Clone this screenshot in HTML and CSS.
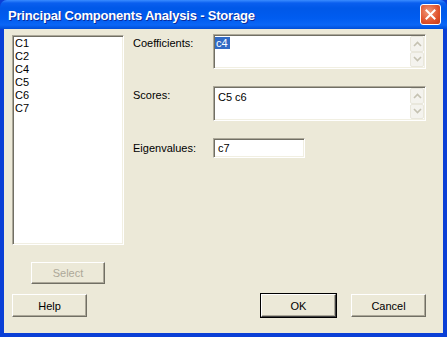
FILE: index.html
```html
<!DOCTYPE html>
<html lang="en">
<head>
  <meta charset="UTF-8">
  <title>Principal Components Analysis - Storage</title>
  <link rel="stylesheet" href="styles.css">
</head>
<body>

  <div class="window">
    <!-- Title bar -->
    <div class="titlebar">
      <span class="title">Principal Components Analysis - Storage</span>
      <span class="close">
        <svg width="11" height="11" viewBox="0 0 11 11">
          <path d="M1.5 1.5 L9.5 9.5 M9.5 1.5 L1.5 9.5" stroke="#fff" stroke-width="2" stroke-linecap="square" fill="none"/>
        </svg>
      </span>
    </div>

    <div class="client">
      <div class="main">
        <div class="varcol">
          <ul class="varlist">
            <li>C1</li>
            <li>C2</li>
            <li>C4</li>
            <li>C5</li>
            <li>C6</li>
            <li>C7</li>
          </ul>
          <button class="btn btn-select" disabled>Select</button>
        </div>

        <div class="form">
          <label class="lbl">Coefficients:</label>
          <div class="field multi">
            <div class="text"><span class="sel">c4</span></div>
            <div class="spin">
              <span class="arrow"><svg width="9" height="6" viewBox="0 0 9 6"><polyline points="1,5 4.5,1.5 8,5" stroke="#c5c2b2" stroke-width="1.6" fill="none"/></svg></span>
              <span class="arrow"><svg width="9" height="6" viewBox="0 0 9 6"><polyline points="1,1 4.5,4.5 8,1" stroke="#c5c2b2" stroke-width="1.6" fill="none"/></svg></span>
            </div>
          </div>

          <label class="lbl">Scores:</label>
          <div class="field multi scores">
            <div class="text">C5 c6</div>
            <div class="spin">
              <span class="arrow"><svg width="9" height="6" viewBox="0 0 9 6"><polyline points="1,5 4.5,1.5 8,5" stroke="#c5c2b2" stroke-width="1.6" fill="none"/></svg></span>
              <span class="arrow"><svg width="9" height="6" viewBox="0 0 9 6"><polyline points="1,1 4.5,4.5 8,1" stroke="#c5c2b2" stroke-width="1.6" fill="none"/></svg></span>
            </div>
          </div>

          <label class="lbl lbl-mid">Eigenvalues:</label>
          <div class="field single">
            <div class="text">c7</div>
          </div>
        </div>
      </div>

      <div class="actions">
        <button class="btn">Help</button>
        <span class="spacer"></span>
        <button class="btn btn-default">OK</button>
        <button class="btn">Cancel</button>
      </div>
    </div>
  </div>

</body>
</html>
```

FILE: styles.css
```css
body {
  margin: 0;
  background: #ece9d8;
  font-family: "Liberation Sans", Arial, sans-serif;
  font-size: 11px;
  color: #000;
}

.window {
  width: 447px;
  height: 337px;
  display: flex;
  flex-direction: column;
  background: #0a3fd6;
}

/* Title bar */
.titlebar {
  height: 29px;
  flex: none;
  display: flex;
  align-items: center;
  padding: 0 6px 0 8px;
  border-radius: 7px 7px 0 0;
  background: linear-gradient(#3a8cff 0px, #0a5fef 3px, #0058e8 8px, #005cf0 18px, #0a66f6 25px, #004ed8 29px);
}

.title {
  flex: 1;
  color: #fff;
  font-weight: bold;
  font-size: 13px;
  letter-spacing: -0.2px;
  text-shadow: 1px 1px 0 #0b2c9c;
  padding-top: 1px;
}

.close {
  width: 19px;
  height: 19px;
  border: 1px solid #fff;
  border-radius: 3px;
  background: radial-gradient(circle at 40% 35%, #f09a7c, #e0522c 60%, #c63a16);
  display: flex;
  align-items: center;
  justify-content: center;
}

/* Client area */
.client {
  flex: 1;
  background: #ece9d8;
  margin: 0 4px 4px 4px;
  padding: 5px 17px 0 8px;
  display: flex;
  flex-direction: column;
}

.main {
  display: flex;
  gap: 9px;
}

.varcol {
  width: 112px;
  display: flex;
  flex-direction: column;
  align-items: center;
}

.varlist {
  list-style: none;
  margin: 1px 0 0 0;
  width: 112px;
  height: 210px;
  box-sizing: border-box;
  background: #fff;
  border: 1px solid;
  border-color: #aca899 #fff #fff #aca899;
  box-shadow: inset 1px 1px 0 #716f64, inset -1px -1px 0 #f1efe2;
  padding: 1px 0 0 2px;
}

.varlist li {
  line-height: 13px;
}

.form {
  display: grid;
  grid-template-columns: 80px 213px;
  grid-template-rows: 35px 35px 20px;
  row-gap: 17px;
}

.lbl {
  padding-top: 3px;
  line-height: 13px;
}

.lbl-mid {
  padding-top: 0;
  align-self: center;
}

.field {
  box-sizing: border-box;
  background: #fff;
  border: 1px solid;
  border-color: #aca899 #fff #fff #aca899;
  box-shadow: inset 1px 1px 0 #716f64, inset -1px -1px 0 #f1efe2;
  display: flex;
}

.field .text {
  flex: 1;
  padding: 2px 0 0 1px;
  line-height: 13px;
}

.single {
  width: 92px;
  justify-self: start;
}

.single .text {
  padding-top: 3px;
  padding-left: 4px;
}

.scores .text {
  padding-left: 4px;
  padding-top: 4px;
}

.sel {
  background: #316ac5;
  color: #fff;
  padding: 0 2px 0 1px;
}

.spin {
  width: 14px;
  margin: 1px 1px 1px 0;
  display: flex;
  flex-direction: column;
}

.arrow {
  flex: 1;
  display: flex;
  align-items: center;
  justify-content: center;
  background: #f4f3ee;
  border: 1px solid #e9e7dc;
  border-radius: 2px;
}

/* Buttons */
.btn {
  font-family: "Liberation Sans", Arial, sans-serif;
  font-size: 11px;
  width: 75px;
  height: 23px;
  padding: 0;
  background: #ece9d8;
  color: #000;
  border: 1px solid;
  border-color: #fff #716f64 #716f64 #fff;
  box-shadow: inset -1px -1px 0 #aca899;
}

.btn-select {
  width: 74px;
  height: 22px;
  margin-top: 17px;
  color: #aca899;
}

.btn-default {
  outline: 1px solid #000;
  outline-offset: 0;
  border-color: #fff #404040 #404040 #fff;
}

.actions {
  display: flex;
  align-items: center;
  gap: 15px;
  margin-top: 10px;
}

.spacer {
  flex: 1;
}
```
